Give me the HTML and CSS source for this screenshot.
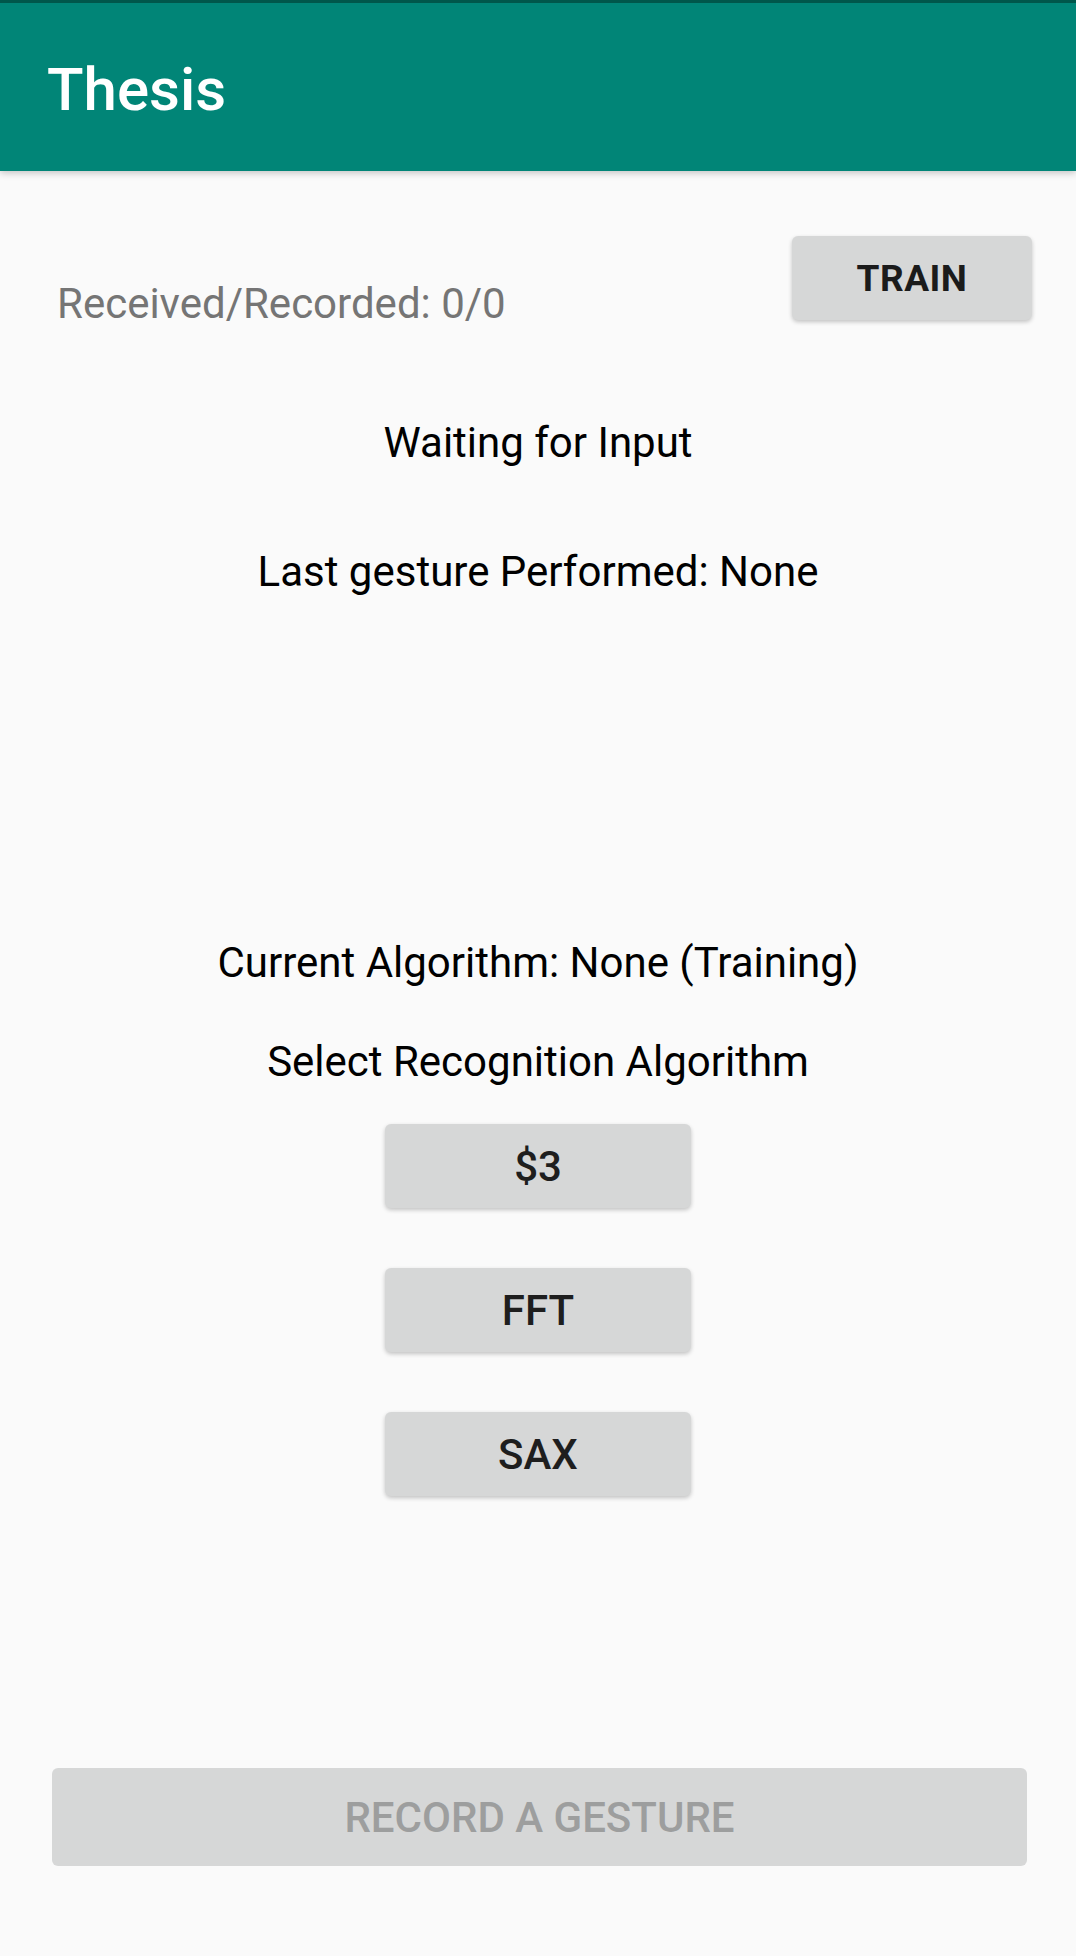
FILE: index.html
```html
<!DOCTYPE html>
<html lang="en">
<head>
<meta charset="utf-8">
<title>Thesis</title>
<link rel="stylesheet" href="styles.css">
</head>
<body>
<div class="screen">
  <header class="appbar">
    <h1 class="appbar-title">Thesis</h1>
  </header>
  <main class="content">
    <div class="top-row">
      <p class="status-count">Received/Recorded: 0/0</p>
      <button class="btn btn-train" type="button">TRAIN</button>
    </div>
    <p class="label label-waiting">Waiting for Input</p>
    <p class="label label-last">Last gesture Performed: None</p>
    <p class="label label-current">Current Algorithm: None (Training)</p>
    <p class="label label-select">Select Recognition Algorithm</p>
    <div class="algo-list">
      <button class="btn btn-algo" type="button">$3</button>
      <button class="btn btn-algo" type="button">FFT</button>
      <button class="btn btn-algo" type="button">SAX</button>
    </div>
    <button class="btn btn-record" type="button" disabled>RECORD A GESTURE</button>
  </main>
</div>
</body>
</html>
```
FILE: styles.css
```css
html, body {
  margin: 0;
  padding: 0;
  background: #fafafa;
}

.screen {
  width: 1076px;
  height: 1956px;
  background: #fafafa;
  font-family: Roboto, "Noto Sans", "Liberation Sans", sans-serif;
  display: flex;
  flex-direction: column;
  overflow: hidden;
}

.appbar {
  height: 168px;
  border-top: 3px solid #00574b;
  background: #018577;
  box-shadow: 0 2px 7px rgba(0, 0, 0, 0.22);
  position: relative;
  z-index: 1;
  box-sizing: content-box;
}

.appbar-title {
  margin: 0;
  padding: 57px 0 0 47px;
  font-size: 60px;
  line-height: 60px;
  font-weight: 500;
  color: #ffffff;
}

.content {
  display: flex;
  flex-direction: column;
  align-items: center;
}

.top-row {
  align-self: stretch;
  display: flex;
  justify-content: space-between;
  align-items: flex-start;
  height: 84px;
  margin-top: 65px;
  padding: 0 44px 0 57px;
}

.status-count {
  margin: 43px 0 0 0;
  font-size: 42px;
  line-height: 49px;
  color: #757575;
}

.btn {
  font-family: Roboto, "Noto Sans", "Liberation Sans", sans-serif;
  border: none;
  background: #d6d7d7;
  border-radius: 6px;
  box-shadow: 0 2px 4px rgba(0, 0, 0, 0.22);
  padding: 0;
  display: flex;
  align-items: center;
  justify-content: center;
}

.btn-train {
  width: 240px;
  height: 84px;
  font-size: 37px;
  font-weight: 700;
  color: #1b1b1b;
  letter-spacing: 0.5px;
}

.label {
  margin: 0;
  font-size: 42px;
  line-height: 49px;
  color: #000000;
  text-align: center;
}

.label-waiting { margin-top: 98px; }
.label-last { margin-top: 80px; }
.label-current { margin-top: 342px; }
.label-select { margin-top: 50px; }

.algo-list {
  margin-top: 38px;
  display: flex;
  flex-direction: column;
  gap: 60px;
}

.btn-algo {
  width: 306px;
  height: 84px;
  font-size: 42px;
  font-weight: 500;
  color: #1e1e1e;
}

.btn-record {
  margin-top: 272px;
  width: 975px;
  height: 98px;
  font-size: 42px;
  font-weight: 500;
  color: #9d9e9e;
  box-shadow: none;
  margin-left: 3px;
}
```
